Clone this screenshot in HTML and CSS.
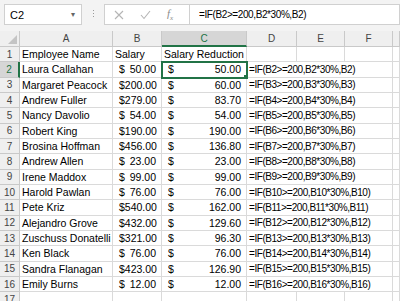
FILE: index.html
```html
<!DOCTYPE html>
<html lang="en">
<head>
<meta charset="UTF-8">
<title>Salary Reduction</title>
<link rel="stylesheet" href="styles.css">
</head>
<body>
    <!-- Formula bar -->
    <div class="toolbar">
        <div class="name-box">
            <span>C2</span>
            <span class="arrow">&#9662;</span>
        </div>
        <div class="grip"><i></i><i></i><i></i></div>
        <div class="fx-buttons">
            <svg width="10" height="10" viewBox="0 0 10 10"><path d="M1 1 L9 9 M9 1 L1 9" stroke="#b5b5b5" stroke-width="1.1" fill="none"/></svg>
            <svg width="11" height="10" viewBox="0 0 11 10"><path d="M1 5 L4 8.5 L10 1" stroke="#b5b5b5" stroke-width="1.1" fill="none"/></svg>
            <span class="fx">f<sub>x</sub></span>
        </div>
        <div class="formula">=IF(B2&gt;=200,B2*30%,B2)</div>
    </div>

    <!-- Sheet -->
    <div class="sheet">
        <div class="hd corner"><span class="tri"></span></div>
        <div class="hd col">A</div>
        <div class="hd col">B</div>
        <div class="hd col sel">C</div>
        <div class="hd col">D</div>
        <div class="hd col">E</div>
        <div class="hd col">F</div>
        <div class="hd col"></div>

        <div class="hd row">1</div>
        <div class="cell">Employee Name</div>
        <div class="cell">Salary</div>
        <div class="cell">Salary Reduction</div>
        <div class="cell"></div><div class="cell"></div><div class="cell"></div><div class="cell"></div>

        <div class="hd row sel">2</div>
        <div class="cell">Laura Callahan</div>
        <div class="cell acc"><span>$</span><span>50.00</span></div>
        <div class="cell acc active"><span>$</span><span>50.00</span></div>
        <div class="cell fml">=IF(B2&gt;=200,B2*30%,B2)</div><div class="cell"></div>

        <div class="hd row">3</div>
        <div class="cell">Margaret Peacock</div>
        <div class="cell acc"><span>$</span><span>200.00</span></div>
        <div class="cell acc"><span>$</span><span>60.00</span></div>
        <div class="cell fml">=IF(B3&gt;=200,B3*30%,B3)</div><div class="cell"></div>

        <div class="hd row">4</div>
        <div class="cell">Andrew Fuller</div>
        <div class="cell acc"><span>$</span><span>279.00</span></div>
        <div class="cell acc"><span>$</span><span>83.70</span></div>
        <div class="cell fml">=IF(B4&gt;=200,B4*30%,B4)</div><div class="cell"></div>

        <div class="hd row">5</div>
        <div class="cell">Nancy Davolio</div>
        <div class="cell acc"><span>$</span><span>54.00</span></div>
        <div class="cell acc"><span>$</span><span>54.00</span></div>
        <div class="cell fml">=IF(B5&gt;=200,B5*30%,B5)</div><div class="cell"></div>

        <div class="hd row">6</div>
        <div class="cell">Robert King</div>
        <div class="cell acc"><span>$</span><span>190.00</span></div>
        <div class="cell acc"><span>$</span><span>190.00</span></div>
        <div class="cell fml">=IF(B6&gt;=200,B6*30%,B6)</div><div class="cell"></div>

        <div class="hd row">7</div>
        <div class="cell">Brosina Hoffman</div>
        <div class="cell acc"><span>$</span><span>456.00</span></div>
        <div class="cell acc"><span>$</span><span>136.80</span></div>
        <div class="cell fml">=IF(B7&gt;=200,B7*30%,B7)</div><div class="cell"></div>

        <div class="hd row">8</div>
        <div class="cell">Andrew Allen</div>
        <div class="cell acc"><span>$</span><span>23.00</span></div>
        <div class="cell acc"><span>$</span><span>23.00</span></div>
        <div class="cell fml">=IF(B8&gt;=200,B8*30%,B8)</div><div class="cell"></div>

        <div class="hd row">9</div>
        <div class="cell">Irene Maddox</div>
        <div class="cell acc"><span>$</span><span>99.00</span></div>
        <div class="cell acc"><span>$</span><span>99.00</span></div>
        <div class="cell fml">=IF(B9&gt;=200,B9*30%,B9)</div><div class="cell"></div>

        <div class="hd row">10</div>
        <div class="cell">Harold Pawlan</div>
        <div class="cell acc"><span>$</span><span>76.00</span></div>
        <div class="cell acc"><span>$</span><span>76.00</span></div>
        <div class="cell fml">=IF(B10&gt;=200,B10*30%,B10)</div><div class="cell"></div>

        <div class="hd row">11</div>
        <div class="cell">Pete Kriz</div>
        <div class="cell acc"><span>$</span><span>540.00</span></div>
        <div class="cell acc"><span>$</span><span>162.00</span></div>
        <div class="cell fml">=IF(B11&gt;=200,B11*30%,B11)</div><div class="cell"></div>

        <div class="hd row">12</div>
        <div class="cell">Alejandro Grove</div>
        <div class="cell acc"><span>$</span><span>432.00</span></div>
        <div class="cell acc"><span>$</span><span>129.60</span></div>
        <div class="cell fml">=IF(B12&gt;=200,B12*30%,B12)</div><div class="cell"></div>

        <div class="hd row">13</div>
        <div class="cell">Zuschuss Donatelli</div>
        <div class="cell acc"><span>$</span><span>321.00</span></div>
        <div class="cell acc"><span>$</span><span>96.30</span></div>
        <div class="cell fml">=IF(B13&gt;=200,B13*30%,B13)</div><div class="cell"></div>

        <div class="hd row">14</div>
        <div class="cell">Ken Black</div>
        <div class="cell acc"><span>$</span><span>76.00</span></div>
        <div class="cell acc"><span>$</span><span>76.00</span></div>
        <div class="cell fml">=IF(B14&gt;=200,B14*30%,B14)</div><div class="cell"></div>

        <div class="hd row">15</div>
        <div class="cell">Sandra Flanagan</div>
        <div class="cell acc"><span>$</span><span>423.00</span></div>
        <div class="cell acc"><span>$</span><span>126.90</span></div>
        <div class="cell fml">=IF(B15&gt;=200,B15*30%,B15)</div><div class="cell"></div>

        <div class="hd row">16</div>
        <div class="cell">Emily Burns</div>
        <div class="cell acc"><span>$</span><span>12.00</span></div>
        <div class="cell acc"><span>$</span><span>12.00</span></div>
        <div class="cell fml">=IF(B16&gt;=200,B16*30%,B16)</div><div class="cell"></div>

        <div class="hd row">17</div>
        <div class="cell"></div><div class="cell"></div><div class="cell"></div>
        <div class="cell"></div><div class="cell"></div><div class="cell"></div><div class="cell"></div>
    </div>
</body>
</html>
```

FILE: styles.css
```css
body {
    margin: 0;
    font-family: "Liberation Sans", Arial, sans-serif;
    font-size: 10.5px;
    color: #000;
    background-color: #fff;
    overflow: hidden;
}

/* Formula bar */
.toolbar {
    display: flex;
    align-items: flex-start;
    height: 31px;
    padding: 4px 0 0 4px;
    box-sizing: border-box;
    background-color: #f3f3f3;
}

.name-box {
    display: flex;
    align-items: center;
    justify-content: space-between;
    width: 78px;
    height: 21px;
    padding: 0 6px 0 5px;
    box-sizing: border-box;
    background-color: #fff;
    border: 1px solid #d0d0d0;
    font-size: 11px;
}

.name-box .arrow {
    font-size: 8px;
    color: #666;
}

.grip {
    display: flex;
    flex-direction: column;
    gap: 2px;
    width: 22px;
    padding-top: 6px;
    align-items: center;
}

.grip i {
    width: 1px;
    height: 1px;
    background-color: #999;
}

.fx-buttons {
    display: flex;
    align-items: center;
    gap: 16px;
    width: 86px;
    height: 21px;
    padding-left: 9px;
    box-sizing: border-box;
    background-color: #fff;
    border: 1px solid #d0d0d0;
}

.fx {
    font-family: "Liberation Serif", serif;
    font-style: italic;
    font-size: 11px;
    color: #8a8a8a;
}

.fx sub {
    font-size: 7px;
}

.formula {
    flex: 1;
    height: 21px;
    line-height: 20px;
    padding-left: 9px;
    box-sizing: border-box;
    background-color: #fff;
    border: 1px solid #d0d0d0;
    border-left: none;
    font-size: 10px;
    letter-spacing: -0.4px;
}

/* Sheet grid */
.sheet {
    display: grid;
    grid-template-columns: 20px 93px 49px 85px 50px 48px 48px 7px;
    grid-template-rows: 16px repeat(17, 15.33px);
}

.hd {
    display: flex;
    align-items: center;
    justify-content: center;
    background-color: #efefef;
    border-right: 1px solid #c9c9c9;
    border-bottom: 1px solid #c9c9c9;
    color: #444;
    font-size: 10px;
    box-sizing: border-box;
}

.hd.corner {
    align-items: flex-end;
    justify-content: flex-end;
    padding: 0 2px 2px 0;
}

.tri {
    width: 0;
    height: 0;
    border-left: 9px solid transparent;
    border-bottom: 9px solid #c4c4c4;
}

.hd.col.sel {
    background-color: #d6d6d6;
    color: #217346;
    border-bottom: 2px solid #217346;
}

.hd.row.sel {
    background-color: #d6d6d6;
    color: #217346;
    border-right: 2px solid #217346;
}

.cell {
    display: flex;
    align-items: center;
    padding: 0 2px;
    border-right: 1px solid #dadada;
    border-bottom: 1px solid #dadada;
    box-sizing: border-box;
    white-space: nowrap;
    overflow: hidden;
}

.cell.acc {
    justify-content: space-between;
    padding: 0 5px 0 6px;
}

.cell.fml {
    grid-column: span 3;
    padding-left: 2px;
    font-size: 10px;
    letter-spacing: -0.45px;
}

.cell.active {
    position: relative;
    outline: 2px solid #217346;
    outline-offset: -1px;
    z-index: 1;
}

.cell.active::after {
    content: "";
    position: absolute;
    right: -3px;
    bottom: -3px;
    width: 4px;
    height: 4px;
    background-color: #217346;
    border: 1px solid #fff;
}
```
